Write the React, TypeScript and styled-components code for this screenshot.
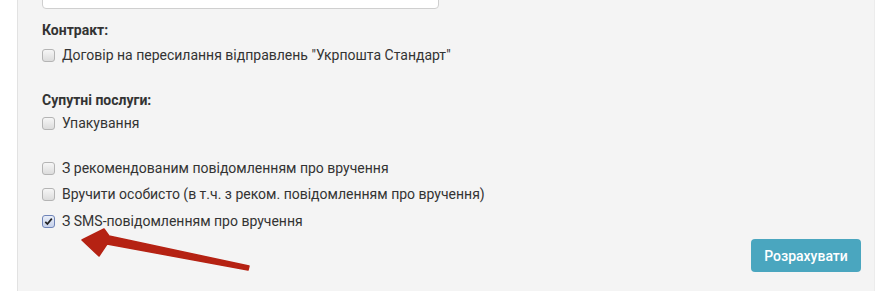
import React from 'react';
import styled, { createGlobalStyle } from 'styled-components';

const GlobalStyle = createGlobalStyle`
  html, body {
    margin: 0;
    padding: 0;
    background: #ffffff;
  }
  body {
    font-family: Roboto, "Noto Sans", "Liberation Sans", sans-serif;
    font-size: 14px;
    color: #333333;
  }
`;

const Page = styled.div`
  width: 879px;
  height: 291px;
  overflow: hidden;
  display: flex;
  padding-left: 17px;
  box-sizing: border-box;
`;

const Panel = styled.div`
  position: relative;
  flex: 1;
  margin-right: 4px;
  background: #f4f4f4;
  border-left: 1px solid #e2e2e2;
  border-right: 1px solid #ececec;
  padding: 0 13px 0 24px;
  display: flex;
  flex-direction: column;
`;

const TopInput = styled.div`
  width: 395px;
  height: 14px;
  margin-top: -7px;
  background: #ffffff;
  border: 1px solid #cfcfcf;
  border-radius: 4px;
`;

const Section = styled.div<{ $top: number }>`
  margin-top: ${({ $top }) => $top}px;
  display: flex;
  flex-direction: column;
`;

const Label = styled.div<{ $below?: number }>`
  font-weight: 700;
  font-size: 14px;
  line-height: 20px;
  color: #333333;
  margin-bottom: ${({ $below }) => $below ?? 5}px;
`;

const Row = styled.label<{ $gap?: number }>`
  display: flex;
  align-items: center;
  gap: 7px;
  height: 20px;
  margin-top: ${({ $gap }) => $gap ?? 0}px;
  font-size: 14px;
  color: #333333;
`;

const Box = styled.span<{ $checked?: boolean }>`
  width: 11px;
  height: 11px;
  flex: none;
  border-radius: 3px;
  border: 1px solid ${({ $checked }) => ($checked ? '#6f84b8' : '#b4b4b4')};
  background: ${({ $checked }) =>
    $checked
      ? 'linear-gradient(#e9eef8, #c6d1ea)'
      : 'linear-gradient(#f6f6f6, #dcdcdc)'};
  display: flex;
  align-items: center;
  justify-content: center;
  margin-top: 1px;
`;

const Footer = styled.div`
  display: flex;
  justify-content: flex-end;
  margin-top: 8px;
`;

const Button = styled.button`
  background: #4aa6bf;
  color: #ffffff;
  border: none;
  border-radius: 4px;
  height: 33px;
  width: 110px;
  font-family: Roboto, "Noto Sans", "Liberation Sans", sans-serif;
  font-size: 14px;
  font-weight: 500;
  cursor: pointer;
`;

const Arrow = styled.svg`
  position: absolute;
  left: 0;
  top: 0;
  pointer-events: none;
`;

const Check = () => (
  <svg width="9" height="9" viewBox="0 0 9 9">
    <path d="M1.3 4.8 L3.4 7 L7.8 1.6" fill="none" stroke="#222" strokeWidth="1.7" />
  </svg>
);

interface ItemProps {
  text: string;
  checked?: boolean;
  gap?: number;
}

const Item: React.FC<ItemProps> = ({ text, checked, gap }) => (
  <Row $gap={gap}>
    <Box $checked={checked}>{checked && <Check />}</Box>
    <span>{text}</span>
  </Row>
);

export default function App() {
  return (
    <>
      <GlobalStyle />
      <Page>
        <Panel>
          <TopInput />
          <Section $top={11}>
            <Label>Контракт:</Label>
            <Item text={'Договір на пересилання відправлень "Укрпошта Стандарт"'} />
          </Section>
          <Section $top={25}>
            <Label $below={3}>Супутні послуги:</Label>
            <Item text="Упакування" />
            <Item gap={25} text="З рекомендованим повідомленням про вручення" />
            <Item gap={6} text="Вручити особисто (в т.ч. з реком. повідомленням про вручення)" />
            <Item gap={7} checked text="З SMS-повідомленням про вручення" />
          </Section>
          <Footer>
            <Button>Розрахувати</Button>
          </Footer>
          <Arrow width="300" height="291" viewBox="0 0 300 291">
            <path
              d="M230 270 L89 244 L81 256 L64 240 L86 229 L91 236 L231 266 Z"
              fill="#b52213"
              stroke="#b52213"
              strokeWidth="1.5"
              strokeLinejoin="round"
            />
          </Arrow>
        </Panel>
      </Page>
    </>
  );
}
